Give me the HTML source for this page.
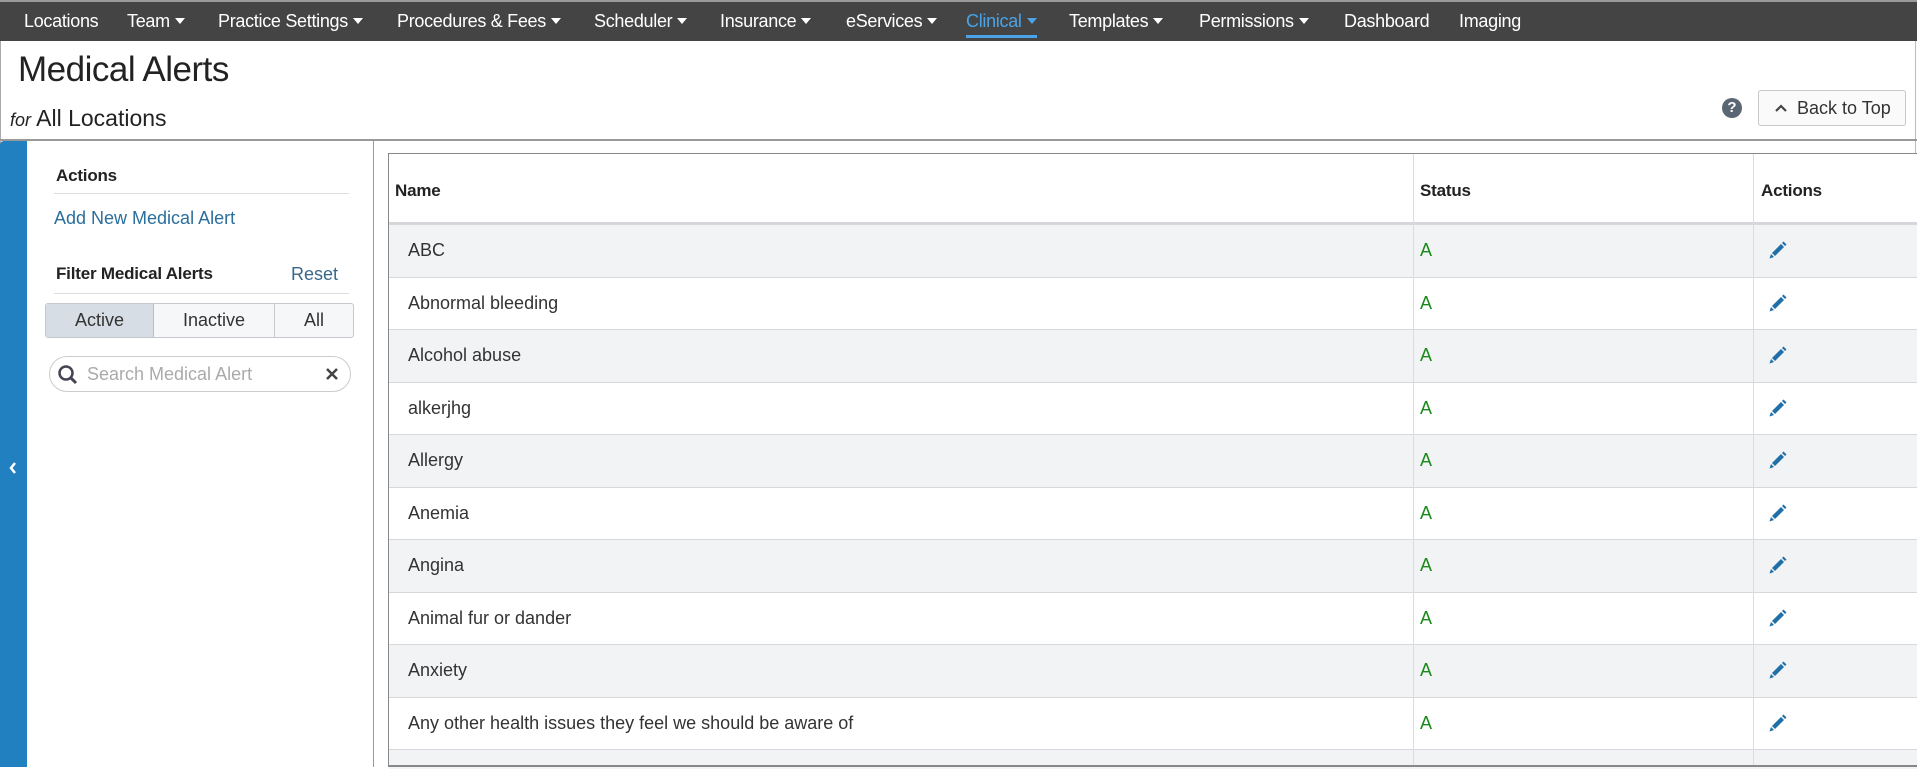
<!DOCTYPE html>
<html><head><meta charset="utf-8"><style>
*{margin:0;padding:0;box-sizing:border-box}
body{width:1917px;height:767px;overflow:hidden;background:#fff;font-family:"Liberation Sans",Arial,sans-serif;color:#222;position:relative}
.a{position:absolute;white-space:nowrap}
#nav{position:absolute;left:0;top:0;width:1917px;height:41px;background:#444;border-top:2px solid #999}
#nav span{position:absolute;top:9px;color:#fff;font-size:18px;letter-spacing:-0.3px}
.car{display:inline-block;width:0;height:0;border-left:5px solid transparent;border-right:5px solid transparent;border-top:6px solid #fff;margin-left:5px;vertical-align:3px}
.tbl{position:absolute;left:388px;top:153px;width:1540px;height:614px;border:1px solid #888;border-right:none}
.row{position:absolute;left:0;width:1540px;border-top:1px solid #d6d8dc;font-size:18px;color:#333}
.row .n{position:absolute;left:19px}
.row .s{position:absolute;left:1031px;color:#1a8a1a}
.vl{position:absolute;top:0;bottom:0;width:1px;background:#dcdcdc}
.h{font-weight:bold;color:#222;letter-spacing:-0.2px}
</style></head><body>
<div id="nav">
<span style="left:24px">Locations</span>
<span style="left:127px">Team<i class="car"></i></span>
<span style="left:218px">Practice Settings<i class="car"></i></span>
<span style="left:397px">Procedures &amp; Fees<i class="car"></i></span>
<span style="left:594px">Scheduler<i class="car"></i></span>
<span style="left:720px">Insurance<i class="car"></i></span>
<span style="left:846px">eServices<i class="car"></i></span>
<span style="left:966px;color:#4aa3e8;border-bottom:3px solid #4aa3e8;padding-bottom:3px">Clinical<i class="car" style="border-top-color:#4aa3e8"></i></span>
<span style="left:1069px">Templates<i class="car"></i></span>
<span style="left:1199px">Permissions<i class="car"></i></span>
<span style="left:1344px">Dashboard</span>
<span style="left:1459px">Imaging</span>
</div>
<div class="a" style="left:0;top:41px;width:1px;height:726px;background:#aaa"></div>
<div class="a" style="left:1915px;top:41px;width:1px;height:726px;background:#bbb"></div>
<div class="a" style="left:18px;top:50px;font-size:35px;color:#222;letter-spacing:-0.5px">Medical Alerts</div>
<div class="a" style="left:10px;top:105px;font-size:23px;color:#222"><i style="font-size:18px">for</i> All Locations</div>
<div class="a" style="left:1722px;top:98px;width:20px;height:20px;border-radius:50%;background:#5a6673;color:#fff;font-weight:bold;font-size:15px;text-align:center;line-height:20px">?</div>
<div class="a" style="left:1758px;top:90px;width:148px;height:36px;border:1px solid #c8c8c8;border-radius:3px;background:#fafafa;font-size:18px;line-height:34px;padding-left:16px;color:#333"><svg width="12" height="10" style="margin-right:10px;vertical-align:1px"><path d="M1 8 L6 3 L11 8" stroke="#444" stroke-width="2.2" fill="none"/></svg>Back to Top</div>
<div class="a" style="left:0;top:139px;width:1917px;height:2px;background:#999"></div>
<div class="a" style="left:0;top:141px;width:27px;height:626px;background:#2080c0;border-radius:4px 0 0 0"></div>
<svg class="a" style="left:8px;top:461px" width="10" height="14"><path d="M7 2 L3 7 L7 12" stroke="#fff" stroke-width="2.5" fill="none"/></svg>
<div class="a" style="left:373px;top:141px;width:1px;height:626px;background:#999"></div>
<div class="a h" style="left:56px;top:166px;font-size:17px">Actions</div>
<div class="a" style="left:54px;top:193px;width:295px;height:1px;background:#ddd"></div>
<div class="a" style="left:54px;top:208px;font-size:18px;color:#2a6f9c">Add New Medical Alert</div>
<div class="a h" style="left:56px;top:264px;font-size:17px">Filter Medical Alerts</div>
<div class="a" style="left:291px;top:264px;font-size:18px;color:#3a6888">Reset</div>
<div class="a" style="left:54px;top:293px;width:295px;height:1px;background:#ddd"></div>
<div class="a" style="left:45px;top:303px;width:309px;height:35px;border:1px solid #c5c9ce;border-radius:3px;background:#f6f7f9;font-size:18px;color:#333">
<div class="a" style="left:0;top:0;width:108px;height:33px;background:#d6dde4;border-right:1px solid #b8bec5;text-align:center;line-height:33px">Active</div>
<div class="a" style="left:108px;top:0;width:121px;height:33px;border-right:1px solid #c5c9ce;text-align:center;line-height:33px">Inactive</div>
<div class="a" style="left:229px;top:0;width:78px;height:33px;text-align:center;line-height:33px">All</div>
</div>
<div class="a" style="left:49px;top:356px;width:302px;height:36px;border:1px solid #ccc;border-radius:18px;font-size:18px;color:#aaa;line-height:34px;padding-left:37px">Search Medical Alert</div>
<svg class="a" style="left:57px;top:364px" width="22" height="22"><circle cx="9" cy="9" r="6.5" stroke="#445" stroke-width="2.5" fill="none"/><path d="M14 14 L19 19" stroke="#445" stroke-width="3"/></svg>
<svg class="a" style="left:325px;top:367px" width="14" height="14"><path d="M2 2 L12 12 M12 2 L2 12" stroke="#444" stroke-width="2.5"/></svg>
<div class="tbl">
<div class="a h" style="left:0;top:0;width:1540px;height:70px;background:#fff;border-bottom:2px solid #d4d6da;font-size:17px">
<span class="a" style="left:6px;top:27px">Name</span><span class="a" style="left:1031px;top:27px">Status</span><span class="a" style="left:1372px;top:27px">Actions</span></div>
<div class="row" style="top:70px;height:53px;background:#f2f3f5"><span class="n" style="top:15px">ABC</span><span class="s" style="top:15px">A</span></div>
<div class="row" style="top:123px;height:52px;background:#fff"><span class="n" style="top:15px">Abnormal bleeding</span><span class="s" style="top:15px">A</span></div>
<div class="row" style="top:175px;height:53px;background:#f2f3f5"><span class="n" style="top:15px">Alcohol abuse</span><span class="s" style="top:15px">A</span></div>
<div class="row" style="top:228px;height:52px;background:#fff"><span class="n" style="top:15px">alkerjhg</span><span class="s" style="top:15px">A</span></div>
<div class="row" style="top:280px;height:53px;background:#f2f3f5"><span class="n" style="top:15px">Allergy</span><span class="s" style="top:15px">A</span></div>
<div class="row" style="top:333px;height:52px;background:#fff"><span class="n" style="top:15px">Anemia</span><span class="s" style="top:15px">A</span></div>
<div class="row" style="top:385px;height:53px;background:#f2f3f5"><span class="n" style="top:15px">Angina</span><span class="s" style="top:15px">A</span></div>
<div class="row" style="top:438px;height:52px;background:#fff"><span class="n" style="top:15px">Animal fur or dander</span><span class="s" style="top:15px">A</span></div>
<div class="row" style="top:490px;height:53px;background:#f2f3f5"><span class="n" style="top:15px">Anxiety</span><span class="s" style="top:15px">A</span></div>
<div class="row" style="top:543px;height:52px;background:#fff"><span class="n" style="top:15px">Any other health issues they feel we should be aware of</span><span class="s" style="top:15px">A</span></div>
<div class="row" style="top:595px;height:20px;background:#f2f3f5"></div>
<div class="vl" style="left:1024px"></div><div class="vl" style="left:1364px"></div>
</div>
<div class="a" style="left:388px;top:765px;width:1529px;height:2px;background:#888"></div>
<svg width="0" height="0" style="position:absolute"><defs><g id="pen"><path d="M4 13 L13 4 L16 7 L7 16 Z" fill="#1f6fa8"/><path d="M14 3 L15.5 1.5 L18.5 4.5 L17 6 Z" fill="#1f6fa8"/><path d="M3 14 L6 17 L1.5 18.5 Z" fill="#1f6fa8"/></g></defs></svg>
<svg class="a" style="left:1768px;top:240px" width="20" height="20"><use href="#pen"/></svg>
<svg class="a" style="left:1768px;top:293px" width="20" height="20"><use href="#pen"/></svg>
<svg class="a" style="left:1768px;top:345px" width="20" height="20"><use href="#pen"/></svg>
<svg class="a" style="left:1768px;top:398px" width="20" height="20"><use href="#pen"/></svg>
<svg class="a" style="left:1768px;top:450px" width="20" height="20"><use href="#pen"/></svg>
<svg class="a" style="left:1768px;top:503px" width="20" height="20"><use href="#pen"/></svg>
<svg class="a" style="left:1768px;top:555px" width="20" height="20"><use href="#pen"/></svg>
<svg class="a" style="left:1768px;top:608px" width="20" height="20"><use href="#pen"/></svg>
<svg class="a" style="left:1768px;top:660px" width="20" height="20"><use href="#pen"/></svg>
<svg class="a" style="left:1768px;top:713px" width="20" height="20"><use href="#pen"/></svg>
</body></html>
